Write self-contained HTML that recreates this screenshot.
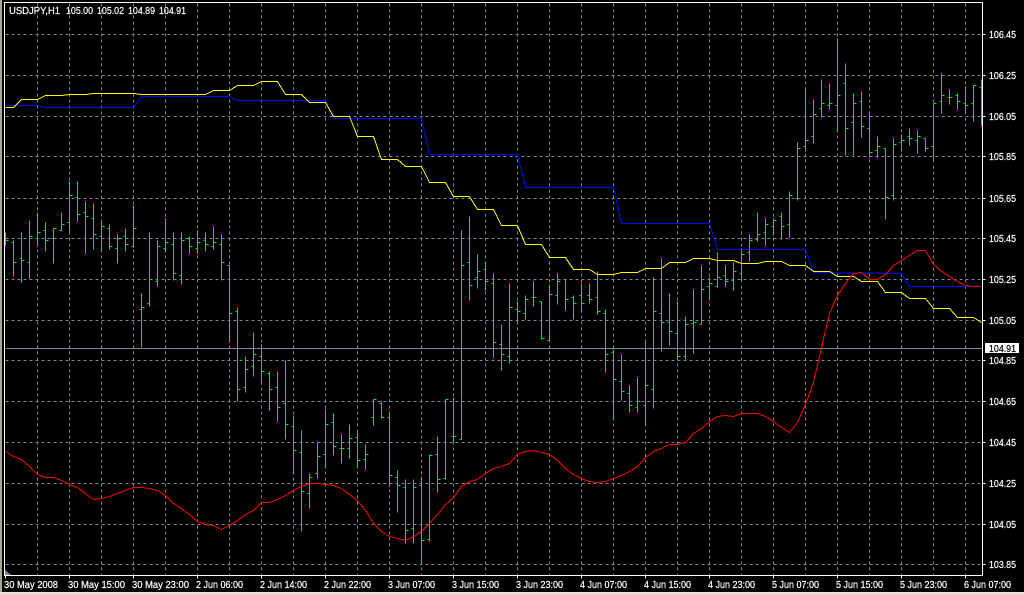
<!DOCTYPE html>
<html><head><meta charset="utf-8"><title>USDJPY,H1</title>
<style>
html,body{margin:0;padding:0;background:#000;width:1024px;height:594px;overflow:hidden}
svg{display:block}
text{font-family:"Liberation Sans",sans-serif;font-size:10px;fill:#fff;stroke:#fff;stroke-width:.2px}
</style></head><body>
<svg width="1024" height="594" viewBox="0 0 1024 594" xmlns="http://www.w3.org/2000/svg">
<rect width="1024" height="594" fill="#000"/>
<rect x="0" y="0" width="2" height="594" fill="#a8a599"/>
<rect x="0" y="592" width="1024" height="2" fill="#e6e3da"/>
<g transform="translate(.5 .5)" fill="none" shape-rendering="crispEdges">
<path stroke="#778899" stroke-dasharray="3 3" d="M5 34H982M5 75H982M5 116H982M5 156H982M5 198H982M5 238H982M5 279H982M5 320H982M5 360H982M5 401H982M5 442H982M5 483H982M5 524H982M5 564H982M37 3V575M69 3V575M101 3V575M133 3V575M165 3V575M197 3V575M229 3V575M261 3V575M293 3V575M325 3V575M357 3V575M389 3V575M421 3V575M453 3V575M485 3V575M517 3V575M549 3V575M581 3V575M613 3V575M645 3V575M677 3V575M709 3V575M741 3V575M773 3V575M805 3V575M837 3V575M869 3V575M901 3V575M933 3V575M965 3V575"/>
<path stroke="#778899" d="M5 348H982"/>
<path stroke="#00ee00" d="M5 232V245M5 240h3M13 240V276M11 242h2M13 262h3M21 232V282M19 258h2M21 260h3M29 220V278M27 262h2M29 236h3M37 212V245M35 238h2M37 232h3M45 222V251M43 230h2M45 240h3M53 228V263M51 238h2M53 228h3M61 212V230M59 230h2M61 224h3M69 181V232M67 222h2M69 195h3M77 181V221M75 197h2M77 214h3M85 201V253M83 212h2M85 216h3M93 203V249M91 218h2M93 234h3M101 222V251M99 236h2M101 226h3M109 224V249M107 228h2M109 246h3M117 234V263M115 248h2M117 238h3M125 228V251M123 236h2M125 244h3M133 205V247M131 246h2M133 228h3M141 293V347M139 309h2M141 307h3M149 232V306M147 303h2M149 279h3M157 240V286M155 281h2M157 246h3M165 218V250M163 248h2M165 242h3M173 232V280M171 244h2M173 273h3M181 232V284M179 275h2M181 240h3M189 236V253M187 238h2M189 246h3M197 230V253M195 248h2M197 242h3M205 232V251M203 240h2M205 244h3M213 226V249M211 246h2M213 242h3M221 234V280M219 244h2M221 262h3M229 265V340M227 265h2M229 313h3M237 307V401M235 311h2M237 389h3M245 356V392M243 387h2M245 369h3M253 332V376M251 366h2M253 354h3M261 344V382M259 356h2M261 371h3M269 371V410M267 373h2M269 389h3M277 371V421M275 387h2M277 407h3M285 360V439M283 403h2M285 424h3M293 415V474M291 426h2M293 450h3M301 430V531M299 452h2M301 491h3M309 473V508M307 493h2M309 477h3M317 442V478M315 473h2M317 456h3M325 409V467M323 454h2M325 424h3M333 413V455M331 422h2M333 446h3M341 434V463M339 448h2M341 448h3M349 424V458M347 448h2M349 438h3M357 432V467M355 437h2M357 460h3M365 444V469M363 459h2M365 454h3M373 399V425M371 417h2M373 399h3M381 401V418M379 403h2M381 417h3M389 411V486M387 417h2M389 475h3M397 470V512M395 477h2M397 485h3M405 479V543M403 487h2M405 530h3M413 479V543M411 528h2M413 487h3M421 476V563M419 485h2M421 540h3M429 454V541M427 539h2M429 455h3M437 436V492M435 454h2M437 479h3M445 399V479M443 478h2M445 399h3M453 397V441M451 436h2M453 436h3M461 230V439M459 439h2M461 265h3M469 216V300M467 262h2M469 285h3M477 254V288M475 277h2M477 271h3M485 261V290M483 269h2M485 281h3M493 273V357M491 283h2M493 342h3M501 324V370M499 344h2M501 354h3M509 283V363M507 356h2M509 307h3M517 301V321M515 309h2M517 311h3M525 295V319M523 313h2M525 299h3M533 281V306M531 297h2M533 297h3M541 301V339M539 301h2M541 338h3M549 284V340M547 340h2M549 294h3M557 273V304M555 295h2M557 281h3M565 279V310M563 279h2M565 299h3M573 295V319M571 297h2M573 303h3M581 283V309M579 295h2M581 303h3M589 283V303M587 295h2M589 299h3M597 271V314M595 297h2M597 311h3M605 309V372M603 313h2M605 354h3M613 349V419M611 352h2M613 379h3M621 354V400M619 381h2M621 391h3M629 385V412M627 393h2M629 405h3M637 377V412M635 407h2M637 401h3M645 342V425M643 405h2M645 385h3M653 277V408M651 389h2M653 311h3M661 258V351M659 313h2M661 322h3M669 293V345M667 322h2M669 331h3M677 301V357M675 333h2M677 356h3M685 316V359M683 356h2M685 324h3M693 289V353M691 323h2M693 322h3M701 265V324M699 324h2M701 289h3M709 277V300M707 286h2M709 283h3M717 252V287M715 286h2M717 277h3M725 265V286M723 275h2M725 281h3M733 262V290M731 280h2M733 271h3M741 248V280M739 273h2M741 254h3M749 234V261M747 252h2M749 240h3M757 212V241M755 239h2M757 234h3M765 218V245M763 232h2M765 224h3M773 218V235M771 226h2M773 220h3M781 212V239M779 216h2M781 226h3M789 191V237M787 224h2M789 195h3M797 142V200M795 198h2M797 148h3M805 87V151M803 146h2M805 140h3M813 99V143M811 136h2M813 114h3M821 79V117M819 108h2M821 103h3M829 83V109M827 105h2M829 103h3M837 38V131M835 105h2M837 95h3M845 63V155M843 83h2M845 128h3M853 93V155M851 122h2M853 103h3M861 91V137M859 101h2M861 126h3M869 114V157M867 128h2M869 152h3M877 136V157M875 150h2M877 146h3M885 148V219M883 148h2M885 197h3M893 138V200M891 195h2M893 144h3M901 134V151M899 142h2M901 140h3M909 128V145M907 136h2M909 138h3M917 130V153M915 140h2M917 136h3M925 138V151M923 138h2M925 148h3M933 103V160M931 146h2M933 103h3M941 73V113M939 101h2M941 95h3M949 89V104M947 97h2M949 97h3M957 93V109M955 95h2M957 101h3M965 86V113M963 103h2M965 105h3M973 85V121M971 103h2M973 85h3M981 79V125M979 87h2"/>
<polyline stroke="#0000ff" points="5,105 37,105 45,107 133,107 141,96 229,96 237,100 325,100 333,118 421,118 429,154 517,154 525,187 613,187 621,223 709,223 717,249 805,249 813,272 901,273 909,286 981,286"/>
<polyline stroke="#ffff00" points="5,107 13,107 21,99 37,99 45,95 61,95 69,94 85,94 93,93 133,93 141,94 205,94 213,90 229,90 237,85 253,85 261,81 277,81 285,94 301,94 309,102 325,102 333,116 349,116 357,136 373,136 381,159 397,159 405,166 421,166 429,182 445,182 453,196 469,196 477,209 493,209 501,225 517,225 525,244 541,244 549,257 565,257 573,269 589,269 597,274 613,274 621,272 637,272 645,268 661,268 669,262 685,262 693,258 709,258 717,260 733,260 741,263 757,263 765,261 781,261 789,265 805,265 813,271 829,271 837,276 853,276 861,281 877,281 885,292 901,292 909,298 925,298 933,308 949,308 957,317 973,317 981,322"/>
<polyline stroke="#ff0000" points="5,451 13,456 21,459 29,466 37,474 45,477 53,477 61,480 69,484 77,487 85,493 93,499 101,498 109,496 117,493 125,490 133,487 141,487 149,488 157,490 165,495 173,503 181,508 189,514 197,521 205,524 213,525 221,529 229,525 237,520 245,514 253,510 261,502 269,502 277,499 285,495 293,490 301,486 309,483 317,483 325,484 333,485 341,488 349,494 357,500 365,510 373,523 381,531 389,536 397,538 405,540 413,536 421,531 429,523 437,514 445,504 453,497 461,486 469,481 477,479 485,473 493,468 501,466 509,463 517,454 525,451 533,450 541,452 549,454 557,460 565,468 573,474 581,478 589,481 597,482 605,481 613,478 621,475 629,471 637,466 645,457 653,451 661,448 669,444 677,444 685,442 693,433 701,428 709,421 717,416 725,415 733,416 741,413 749,413 757,413 765,416 773,421 781,427 789,432 797,422 805,404 813,382 821,347 829,313 837,295 845,283 853,273 861,272 869,279 877,279 885,274 893,265 901,260 909,255 917,250 925,250 933,264 941,271 949,276 957,281 965,285 973,286 981,286"/>
</g>
<polygon points="5,570 11,575 5,575" fill="#778899"/>
<g shape-rendering="crispEdges" fill="#fff">
<rect x="4" y="2" width="979" height="1"/>
<rect x="4" y="2" width="1" height="574"/>
<rect x="982" y="2" width="1" height="574"/>
<rect x="4" y="575" width="979" height="1"/>
</g>
<path fill="none" stroke="#fff" shape-rendering="crispEdges" transform="translate(.5 .5)" d="M982 34h3M982 75h3M982 116h3M982 156h3M982 198h3M982 238h3M982 279h3M982 320h3M982 360h3M982 401h3M982 442h3M982 483h3M982 524h3M982 564h3M5 575v3M69 575v3M133 575v3M197 575v3M261 575v3M325 575v3M389 575v3M453 575v3M517 575v3M581 575v3M645 575v3M709 575v3M773 575v3M837 575v3M901 575v3M965 575v3"/>
<text x="9" y="14" textLength="51" lengthAdjust="spacingAndGlyphs">USDJPY,H1</text>
<text x="66" y="14" textLength="27" lengthAdjust="spacingAndGlyphs">105.00</text>
<text x="97" y="14" textLength="27" lengthAdjust="spacingAndGlyphs">105.02</text>
<text x="128" y="14" textLength="27" lengthAdjust="spacingAndGlyphs">104.89</text>
<text x="159" y="14" textLength="27" lengthAdjust="spacingAndGlyphs">104.91</text>
<text x="989" y="38" textLength="27" lengthAdjust="spacingAndGlyphs">106.45</text>
<text x="989" y="79" textLength="27" lengthAdjust="spacingAndGlyphs">106.25</text>
<text x="989" y="120" textLength="27" lengthAdjust="spacingAndGlyphs">106.05</text>
<text x="989" y="160" textLength="27" lengthAdjust="spacingAndGlyphs">105.85</text>
<text x="989" y="202" textLength="27" lengthAdjust="spacingAndGlyphs">105.65</text>
<text x="989" y="242" textLength="27" lengthAdjust="spacingAndGlyphs">105.45</text>
<text x="989" y="283" textLength="27" lengthAdjust="spacingAndGlyphs">105.25</text>
<text x="989" y="324" textLength="27" lengthAdjust="spacingAndGlyphs">105.05</text>
<text x="989" y="364" textLength="27" lengthAdjust="spacingAndGlyphs">104.85</text>
<text x="989" y="405" textLength="27" lengthAdjust="spacingAndGlyphs">104.65</text>
<text x="989" y="446" textLength="27" lengthAdjust="spacingAndGlyphs">104.45</text>
<text x="989" y="487" textLength="27" lengthAdjust="spacingAndGlyphs">104.25</text>
<text x="989" y="528" textLength="27" lengthAdjust="spacingAndGlyphs">104.05</text>
<text x="989" y="568" textLength="27" lengthAdjust="spacingAndGlyphs">103.85</text>
<rect x="985" y="343" width="34" height="10" fill="#fff" shape-rendering="crispEdges"/>
<text x="989" y="352" textLength="27" lengthAdjust="spacingAndGlyphs" style="fill:#000;stroke:#000">104.91</text>
<text x="4" y="588" textLength="54" lengthAdjust="spacingAndGlyphs">30 May 2008</text>
<text x="68" y="588" textLength="57" lengthAdjust="spacingAndGlyphs">30 May 15:00</text>
<text x="132" y="588" textLength="57" lengthAdjust="spacingAndGlyphs">30 May 23:00</text>
<text x="196" y="588" textLength="47" lengthAdjust="spacingAndGlyphs">2 Jun 06:00</text>
<text x="260" y="588" textLength="47" lengthAdjust="spacingAndGlyphs">2 Jun 14:00</text>
<text x="324" y="588" textLength="47" lengthAdjust="spacingAndGlyphs">2 Jun 22:00</text>
<text x="388" y="588" textLength="47" lengthAdjust="spacingAndGlyphs">3 Jun 07:00</text>
<text x="452" y="588" textLength="47" lengthAdjust="spacingAndGlyphs">3 Jun 15:00</text>
<text x="516" y="588" textLength="47" lengthAdjust="spacingAndGlyphs">3 Jun 23:00</text>
<text x="580" y="588" textLength="47" lengthAdjust="spacingAndGlyphs">4 Jun 07:00</text>
<text x="644" y="588" textLength="47" lengthAdjust="spacingAndGlyphs">4 Jun 15:00</text>
<text x="708" y="588" textLength="47" lengthAdjust="spacingAndGlyphs">4 Jun 23:00</text>
<text x="772" y="588" textLength="47" lengthAdjust="spacingAndGlyphs">5 Jun 07:00</text>
<text x="836" y="588" textLength="47" lengthAdjust="spacingAndGlyphs">5 Jun 15:00</text>
<text x="900" y="588" textLength="47" lengthAdjust="spacingAndGlyphs">5 Jun 23:00</text>
<text x="964" y="588" textLength="47" lengthAdjust="spacingAndGlyphs">6 Jun 07:00</text>
</svg>
</body></html>
